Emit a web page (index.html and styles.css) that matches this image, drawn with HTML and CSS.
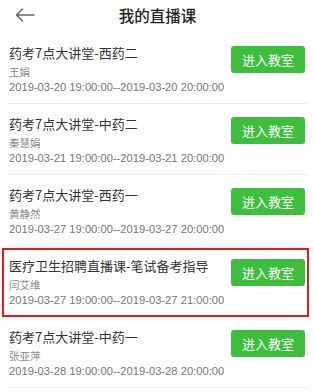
FILE: index.html
```html
<!DOCTYPE html>
<html lang="zh-CN">
<head>
<meta charset="utf-8">
<link rel="stylesheet" href="styles.css">
</head>
<body>
<div class="page">
  <header class="topbar">
    <svg class="back" width="20" height="14" viewBox="0 0 20 14"><path d="M19 7H1.5M7.5 1L1.5 7l6 6" fill="none" stroke="#666" stroke-width="1.5" stroke-linecap="round" stroke-linejoin="round"/></svg>
    <h1 class="title">我的直播课</h1>
  </header>
  <ul class="list">
    <li class="item">
      <div class="info">
        <div class="name">药考7点大讲堂-西药二</div>
        <div class="teacher">王娟</div>
        <div class="time">2019-03-20 19:00:00--2019-03-20 20:00:00</div>
      </div>
      <button class="enter">进入教室</button>
    </li>
    <li class="item">
      <div class="info">
        <div class="name">药考7点大讲堂-中药二</div>
        <div class="teacher">秦慧娟</div>
        <div class="time">2019-03-21 19:00:00--2019-03-21 20:00:00</div>
      </div>
      <button class="enter">进入教室</button>
    </li>
    <li class="item">
      <div class="info">
        <div class="name">药考7点大讲堂-西药一</div>
        <div class="teacher">黄静然</div>
        <div class="time">2019-03-27 19:00:00--2019-03-27 20:00:00</div>
      </div>
      <button class="enter">进入教室</button>
    </li>
    <li class="item marked">
      <div class="info">
        <div class="name">医疗卫生招聘直播课-笔试备考指导</div>
        <div class="teacher">闫艾维</div>
        <div class="time">2019-03-27 19:00:00--2019-03-27 21:00:00</div>
      </div>
      <button class="enter">进入教室</button>
    </li>
    <li class="item">
      <div class="info">
        <div class="name">药考7点大讲堂-中药一</div>
        <div class="teacher">张亚萍</div>
        <div class="time">2019-03-28 19:00:00--2019-03-28 20:00:00</div>
      </div>
      <button class="enter">进入教室</button>
    </li>
  </ul>
</div>
</body>
</html>
```

FILE: styles.css
```css
* { box-sizing: border-box; }
html, body { margin: 0; padding: 0; background: #fff; }
body {
  font-family: "Noto Sans CJK SC", "Noto Sans", sans-serif;
  color: #333;
  overflow: hidden;
}
.page { width: 314px; height: 392px; overflow: hidden; }
.topbar {
  height: 33px;
  display: flex;
  align-items: center;
  justify-content: center;
  position: relative;
}
.back {
  position: absolute;
  left: 15px;
  top: 8px;
}
.title {
  margin: 0;
  font-size: 15.5px;
  font-weight: 500;
  color: #222;
  line-height: 20px;
  margin-top: -3px;
  padding-left: 1px;
}
.list {
  list-style: none;
  margin: 0 6px 0 8px;
  padding: 0;
}
.item {
  display: flex;
  justify-content: space-between;
  align-items: flex-start;
  padding: 12px 3px 9px 1px;
  border-bottom: 1px solid #ececec;
  height: 71px;
}
.info { display: flex; flex-direction: column; }
.name {
  font-size: 13px;
  line-height: 16px;
  color: #333;
}
.teacher {
  font-size: 10.5px;
  line-height: 13px;
  color: #888;
  margin-top: 3.5px;
}
.time {
  font-family: "Liberation Sans", Arial, sans-serif;
  font-size: 11.2px;
  line-height: 14px;
  color: #777;
  margin-top: 2.5px;
}
.enter {
  flex: none;
  width: 74px;
  height: 27px;
  margin-top: 1px;
  border: none;
  border-radius: 3px;
  background: #3dbf3d;
  color: #fff;
  font-family: "Noto Sans CJK SC", sans-serif;
  font-size: 13px;
  padding: 0;
}
.marked { position: relative; }
.marked::after {
  content: "";
  position: absolute;
  left: -6px;
  right: -1px;
  top: 2px;
  bottom: -1px;
  border: 2px solid #e8191d;
  pointer-events: none;
}
```
